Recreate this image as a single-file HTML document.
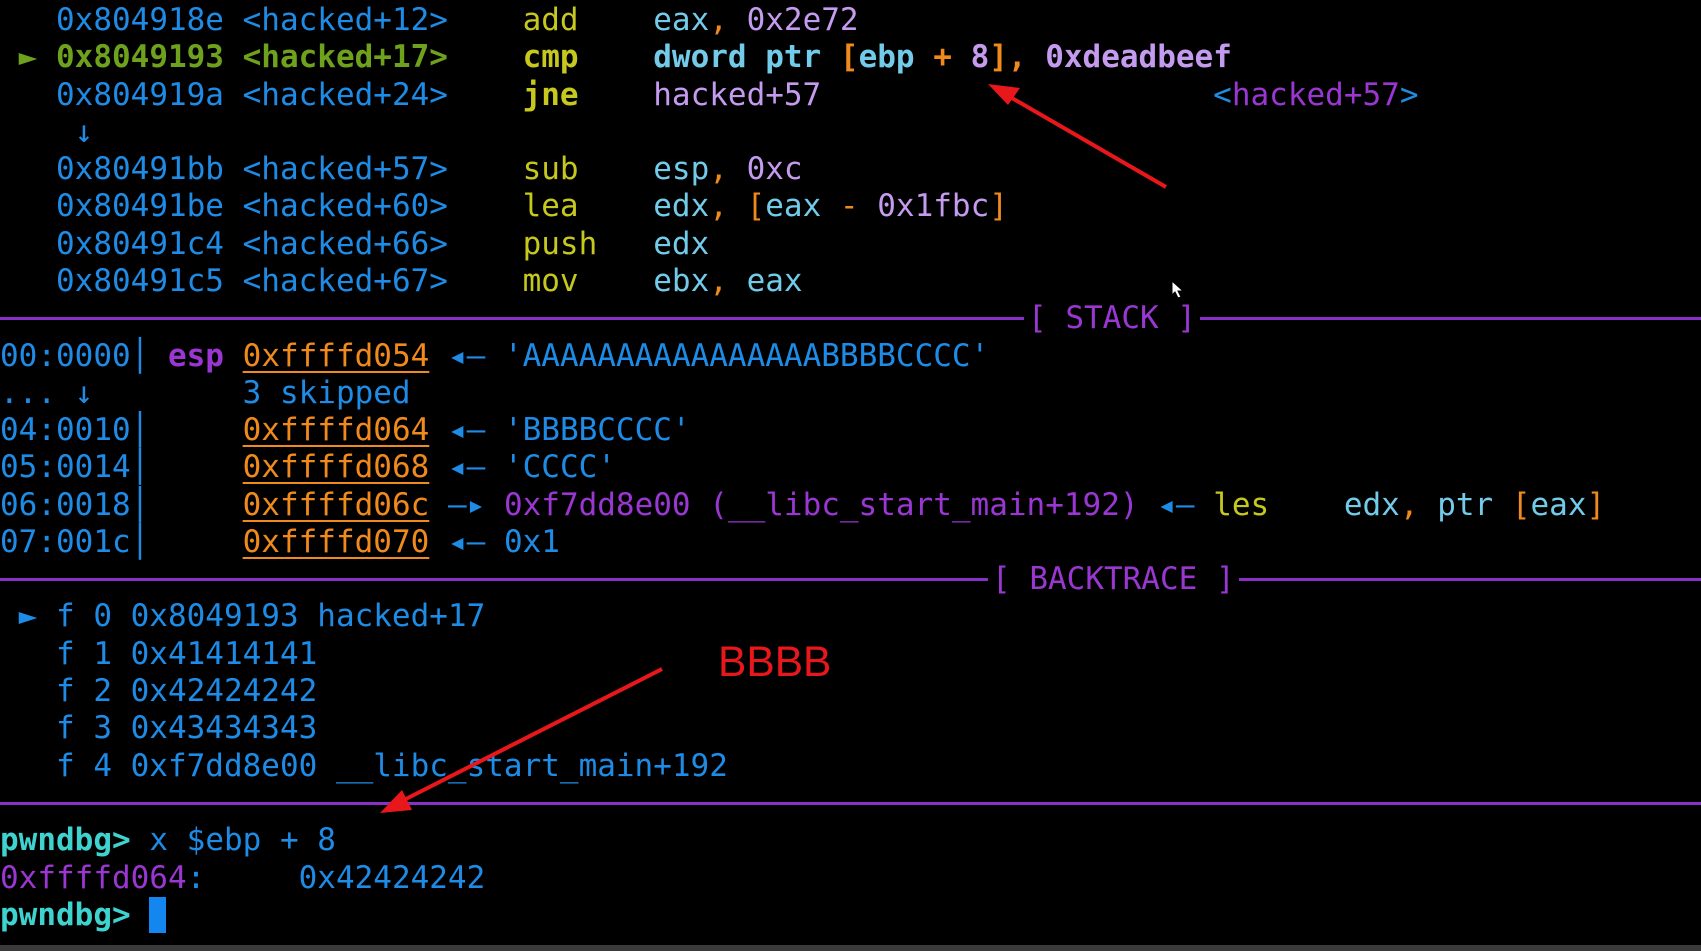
<!DOCTYPE html>
<html><head><meta charset="utf-8">
<style>
html,body{margin:0;padding:0;background:#000;width:1701px;height:951px;overflow:hidden}
body{position:relative;font-family:"DejaVu Sans Mono","Liberation Mono",monospace;font-size:31px}
.r{position:absolute;left:0;height:37.28px;line-height:37.28px;white-space:pre;color:#1e8ce6}
.b{color:#1e8ce6}.g{color:#6fa21c}.y{color:#c6c81e}.c{color:#72cbe9}.p{color:#c59bf0}.o{color:#f08a1c}
.m{color:#9a36d2}.t{color:#3fd3d0}.u{text-decoration:underline;text-decoration-thickness:2px;text-underline-offset:5px}
.bold{font-weight:bold}
.sep{position:absolute;left:0;width:1701px;height:3px;background:#8a2fc8}
.ttl{position:absolute;background:#000;color:#9a36d2;white-space:pre;line-height:37.28px;height:37.28px}
</style></head><body>
<div class="r" style="top:2px">   <span class="b">0x804918e &lt;hacked+12&gt;</span>    <span class="y">add</span>    <span class="c">eax</span><span class="o">,</span> <span class="p">0x2e72</span></div>
<div class="r bold" style="top:39.3px"> <span class="g">► 0x8049193 &lt;hacked+17&gt;</span>    <span class="y">cmp</span>    <span class="c">dword ptr </span><span class="o">[</span><span class="c">ebp</span><span class="o"> + </span><span class="p">8</span><span class="o">], </span><span class="p">0xdeadbeef</span></div>
<div class="r" style="top:76.6px">   <span class="b">0x804919a &lt;hacked+24&gt;</span>    <span class="y bold">jne</span>    <span class="p">hacked+57</span>                     <span class="b">&lt;</span><span class="m">hacked+57</span><span class="b">&gt;</span></div>
<div class="r" style="top:113.8px">    <span class="b">↓</span></div>
<div class="r" style="top:151.1px">   <span class="b">0x80491bb &lt;hacked+57&gt;</span>    <span class="y">sub</span>    <span class="c">esp</span><span class="o">,</span> <span class="p">0xc</span></div>
<div class="r" style="top:188.4px">   <span class="b">0x80491be &lt;hacked+60&gt;</span>    <span class="y">lea</span>    <span class="c">edx</span><span class="o">, [</span><span class="c">eax</span><span class="o"> - </span><span class="p">0x1fbc</span><span class="o">]</span></div>
<div class="r" style="top:225.7px">   <span class="b">0x80491c4 &lt;hacked+66&gt;</span>    <span class="y">push</span>   <span class="c">edx</span></div>
<div class="r" style="top:263px">   <span class="b">0x80491c5 &lt;hacked+67&gt;</span>    <span class="y">mov</span>    <span class="c">ebx</span><span class="o">,</span> <span class="c">eax</span></div>

<div class="sep" style="top:317px"></div>
<div class="ttl" style="top:300px;left:1024px;padding:0 4px">[ STACK ]</div>

<div class="r" style="top:337.5px"><span class="b">00:0000│ </span><span class="m bold">esp</span> <span class="o u">0xffffd054</span> <span class="b">◂—</span> <span class="b">'AAAAAAAAAAAAAAAABBBBCCCC'</span></div>
<div class="r" style="top:374.8px"><span class="b">... ↓        3 skipped</span></div>
<div class="r" style="top:412px"><span class="b">04:0010│     </span><span class="o u">0xffffd064</span> <span class="b">◂—</span> <span class="b">'BBBBCCCC'</span></div>
<div class="r" style="top:449.3px"><span class="b">05:0014│     </span><span class="o u">0xffffd068</span> <span class="b">◂—</span> <span class="b">'CCCC'</span></div>
<div class="r" style="top:486.6px"><span class="b">06:0018│     </span><span class="o u">0xffffd06c</span> <span class="b">—▸</span> <span class="m">0xf7dd8e00 (__libc_start_main+192)</span> <span class="b">◂—</span> <span class="y">les</span>    <span class="c">edx</span><span class="o">,</span> <span class="c">ptr </span><span class="o">[</span><span class="c">eax</span><span class="o">]</span></div>
<div class="r" style="top:523.9px"><span class="b">07:001c│     </span><span class="o u">0xffffd070</span> <span class="b">◂—</span> <span class="b">0x1</span></div>

<div class="sep" style="top:578px"></div>
<div class="ttl" style="top:561px;left:988px;padding:0 4px">[ BACKTRACE ]</div>

<div class="r" style="top:598.4px"> ► f 0 0x8049193 hacked+17</div>
<div class="r" style="top:635.7px">   f 1 0x41414141</div>
<div class="r" style="top:673px">   f 2 0x42424242</div>
<div class="r" style="top:710.3px">   f 3 0x43434343</div>
<div class="r" style="top:747.6px">   f 4 0xf7dd8e00 __libc_start_main+192</div>

<div class="sep" style="top:802px"></div>

<div class="r" style="top:822.2px"><span class="t bold">pwndbg&gt;</span> <span class="b">x $ebp + 8</span></div>
<div class="r" style="top:859.5px"><span class="m">0xffffd064</span><span class="b">:     0x42424242</span></div>
<div class="r" style="top:896.8px"><span class="t bold">pwndbg&gt;</span> </div>
<div style="position:absolute;left:149px;top:897px;width:17px;height:36px;background:#1386f0"></div>

<div style="position:absolute;left:0;top:945px;width:1701px;height:6px;background:#3a3a3a"></div>

<div style="position:absolute;left:718px;top:638px;color:#e8171b;font-family:'Liberation Sans',sans-serif;font-size:42.5px;line-height:50px">BBBB</div>

<svg style="position:absolute;left:0;top:0" width="1701" height="951">
 <g stroke="#e8171b" stroke-width="4" fill="#e8171b">
  <line x1="1166" y1="187" x2="1005" y2="94"/>
  <polygon points="988,84 1020,88 1008,105" stroke="none"/>
  <line x1="662" y1="669" x2="398" y2="803"/>
  <polygon points="380,813 402,790 412,810" stroke="none"/>
 </g>
 <path d="M1172 281 l0 14 l3 -3 l3 6 l3 -1 l-3 -6 l5 0 z" fill="#fff" stroke="#000" stroke-width="1"/>
</svg>
</body></html>
